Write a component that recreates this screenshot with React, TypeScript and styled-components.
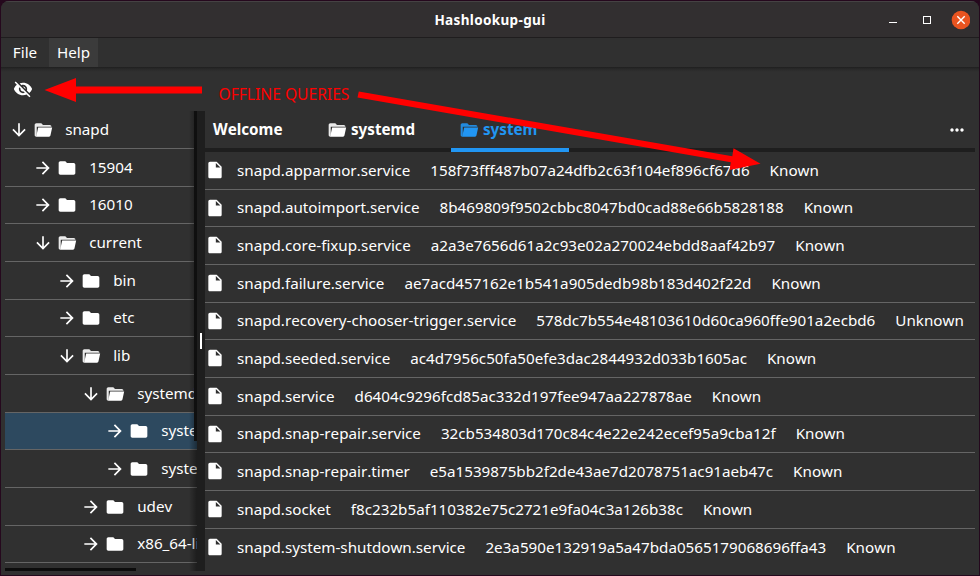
import React from 'react';
import styled, { createGlobalStyle } from 'styled-components';

const GlobalStyle = createGlobalStyle`
  * { box-sizing: border-box; }
  body { margin: 0; background: #2c001e; overflow: hidden; }
`;

const Window = styled.div`
  position: relative;
  width: 980px;
  height: 576px;
  padding: 1px;
  background: #25081d;
  font-family: 'Noto Sans', 'Open Sans', sans-serif;
  font-size: 15.2px;
  font-kerning: none;
  color: #fff;
  overflow: hidden;
`;

const Frame = styled.div`
  display: flex;
  flex-direction: column;
  width: 978px;
  height: 574px;
  border-radius: 8px 8px 0 0;
  background: #303030;
  overflow: hidden;
`;

const TitleBar = styled.header`
  display: grid;
  grid-template-columns: 1fr auto 1fr;
  align-items: center;
  flex: none;
  height: 37px;
  background: #322f30;
  border-top: 1px solid #454243;
  border-bottom: 1px solid #1f1d1e;
`;

const Title = styled.h1`
  grid-column: 2;
  margin: 0;
  font-size: 13.5px;
  line-height: 20px;
  font-weight: 700;
  letter-spacing: 0.35px;
`;

const WindowControls = styled.div`
  display: flex;
  justify-content: flex-end;
  align-items: center;
  height: 18px;
  padding-right: 9px;
`;

const MenuBar = styled.nav`
  display: flex;
  flex: none;
  height: 29px;
`;

const MenuItem = styled.span<{ $active?: boolean; $width: number }>`
  display: flex;
  align-items: center;
  justify-content: center;
  width: ${(p) => p.$width}px;
  height: 29px;
  padding-bottom: 2px;
  background: ${(p) => (p.$active ? '#3b3b3b' : 'transparent')};
`;

const Toolbar = styled.div`
  display: flex;
  flex: none;
  height: 44px;
  padding: 12px 0 0 12px;
  background: linear-gradient(#1f1f1f, #292929 2px, #303030 5px);
`;

const Split = styled.main`
  display: grid;
  grid-template-columns: 192px 8px 770px;
  height: 460px;
  margin-left: 4px;
`;

const TreePane = styled.aside`
  position: relative;
  overflow: hidden;
`;

const TreeRow = styled.div<{ $height: number; $depth: number; $selected?: boolean }>`
  display: flex;
  align-items: center;
  height: ${(p) => p.$height}px;
  padding-left: ${(p) => 4 + p.$depth * 24}px;
  border-bottom: 1px solid #656565;
  background: ${(p) => (p.$selected ? '#2d495f' : 'transparent')};
  white-space: nowrap;
`;

const TreeLabel = styled.span`
  margin-left: 12.2px;
  padding-bottom: 2px;
  line-height: 20px;
`;

const Glyph = styled.svg`
  display: block;
  flex: none;
  width: 20px;
  height: 20px;
  fill: currentColor;
`;

const FolderGlyph = styled(Glyph)<{ $gap: number }>`
  margin-left: ${(p) => p.$gap}px;
`;

const PaneShadow = styled.div`
  position: absolute;
  top: 0;
  right: 0;
  width: 8px;
  height: 100%;
  background: linear-gradient(to right, transparent, rgba(0, 0, 0, 0.4));
`;

const VerticalThumb = styled.div`
  position: absolute;
  top: 0;
  right: 0;
  width: 3px;
  height: 330px;
  background: #0f0f0f;
`;

const HorizontalThumb = styled.div`
  position: absolute;
  bottom: 0;
  left: 0;
  width: 131px;
  height: 3px;
  background: #0c0c0c;
`;

const Divider = styled.div`
  display: flex;
  align-items: center;
  padding-left: 3px;
  background: #1e1e1e;
`;

const Grip = styled.span`
  width: 2px;
  height: 16px;
  background: #fff;
`;

const Content = styled.section`
  display: flex;
  flex-direction: column;
  width: 770px;
`;

const TabBar = styled.div`
  display: flex;
  flex: none;
  height: 41px;
  border-bottom: 4px solid #1e1e1e;
`;

const Tab = styled.div<{ $width: number; $active?: boolean }>`
  display: flex;
  align-items: center;
  width: ${(p) => p.$width}px;
  height: 41px;
  padding-left: 8px;
  font-weight: 700;
  line-height: 20px;
  color: ${(p) => (p.$active ? '#2196f3' : '#fff')};
  border-bottom: 4px solid ${(p) => (p.$active ? '#2196f3' : '#1e1e1e')};
`;

const TabLabel = styled.span<{ $icon?: boolean }>`
  margin-left: ${(p) => (p.$icon ? 4 : 0)}px;
  padding-bottom: 1px;
`;

const TabFolder = styled.span`
  padding-top: 1px;
`;

const MoreButton = styled.div`
  display: flex;
  align-items: center;
  margin-left: auto;
  height: 38px;
  padding-right: 8px;
`;

const FileRow = styled.div<{ $height: number; $last?: boolean }>`
  display: flex;
  align-items: center;
  flex: none;
  height: ${(p) => p.$height}px;
  padding-bottom: 1px;
  border-bottom: 1px solid ${(p) => (p.$last ? 'transparent' : '#656565')};
  line-height: 20px;
  white-space: nowrap;
`;

const FileName = styled.span`
  margin-left: 12px;
  padding-bottom: 1px;
`;

const Cell = styled.span`
  margin-left: 20px;
  padding-bottom: 1px;
`;

const Annotation = styled.svg`
  position: absolute;
  inset: 0;
  pointer-events: none;
`;

const AnnotationText = styled.span`
  position: absolute;
  left: 218.5px;
  top: 85px;
  font-size: 15.6px;
  line-height: 19px;
  color: #f00;
  white-space: nowrap;
`;

const icons = {
  down: 'M20 12l-1.41-1.41L13 16.17V4h-2v12.17l-5.58-5.59L4 12l8 8 8-8z',
  right: 'M12 4l-1.41 1.41L16.17 11H4v2h12.17l-5.58 5.59L12 20l8-8z',
  folder: 'M10 4H4c-1.1 0-2 .9-2 2v12c0 1.1.9 2 2 2h16c1.1 0 2-.9 2-2V8c0-1.1-.9-2-2-2h-8l-2-2z',
  file: 'M6 2c-1.1 0-2 .9-2 2v16c0 1.1.9 2 2 2h12c1.1 0 2-.9 2-2V8l-6-6H6zm7 7V3.5L18.5 9H13z',
  more: 'M6 10c-1.1 0-2 .9-2 2s.9 2 2 2 2-.9 2-2-.9-2-2-2zm12 0c-1.1 0-2 .9-2 2s.9 2 2 2 2-.9 2-2-.9-2-2-2zm-6 0c-1.1 0-2 .9-2 2s.9 2 2 2 2-.9 2-2-.9-2-2-2z',
  hidden:
    'M12 7c2.76 0 5 2.24 5 5 0 .65-.13 1.26-.36 1.83l2.92 2.92c1.51-1.26 2.7-2.89 3.43-4.75-1.73-4.39-6-7.5-11-7.5-1.4 0-2.74.25-3.98.7l2.16 2.16C10.74 7.13 11.35 7 12 7zM2 4.27l2.28 2.28.46.46C3.08 8.3 1.78 10.02 1 12c1.73 4.39 6 7.5 11 7.5 1.55 0 3.03-.3 4.38-.84l.42.42L19.73 22 21 20.73 3.27 3 2 4.27zM7.53 9.8l1.55 1.55c-.05.21-.08.43-.08.65 0 1.66 1.34 3 3 3 .22 0 .44-.03.65-.08l1.55 1.55c-.67.33-1.41.53-2.2.53-2.76 0-5-2.24-5-5 0-.79.2-1.53.53-2.2zm4.31-.78l3.15 3.15.02-.16c0-1.66-1.34-3-3-3l-.17.01z',
};

const Icon = ({ name }: { name: keyof typeof icons }) => (
  <Glyph viewBox="0 0 24 24">
    <path d={icons[name]} />
  </Glyph>
);

const FolderIcon = ({ open, gap = 4 }: { open?: boolean; gap?: number }) => (
  <FolderGlyph viewBox="0 0 24 24" $gap={gap}>
    {open ? (
      <>
        <path
          opacity=".9"
          d="M4 4h6l2 2h8.200c1.100 0 1.900.9 1.900 2.100H4.500v9.900l-.4 2C2.800 20 2 19.100 2 18V6c0-1.100.9-2 2-2z"
        />
        <path d="M6.200 9H23l-2 9.400c-.2 1-.8 1.600-1.800 1.600H3.800z" />
      </>
    ) : (
      <path d={icons.folder} />
    )}
  </FolderGlyph>
);

type Node = { name: string; depth: number; height: number; open?: boolean; selected?: boolean };

const tree: Node[] = [
  { name: 'snapd', depth: 0, height: 38, open: true },
  { name: '15904', depth: 1, height: 38 },
  { name: '16010', depth: 1, height: 37 },
  { name: 'current', depth: 1, height: 38, open: true },
  { name: 'bin', depth: 2, height: 38 },
  { name: 'etc', depth: 2, height: 37 },
  { name: 'lib', depth: 2, height: 38, open: true },
  { name: 'systemd', depth: 3, height: 38, open: true },
  { name: 'system', depth: 4, height: 37, selected: true },
  { name: 'system-generators', depth: 4, height: 38 },
  { name: 'udev', depth: 3, height: 38 },
  { name: 'x86_64-linux-gnu', depth: 3, height: 37 },
];

const files: [string, string, string, number][] = [
  ['snapd.apparmor.service', '158f73fff487b07a24dfb2c63f104ef896cf67d6', 'Known', 38],
  ['snapd.autoimport.service', '8b469809f9502cbbc8047bd0cad88e66b5828188', 'Known', 37],
  ['snapd.core-fixup.service', 'a2a3e7656d61a2c93e02a270024ebdd8aaf42b97', 'Known', 38],
  ['snapd.failure.service', 'ae7acd457162e1b541a905dedb98b183d402f22d', 'Known', 38],
  ['snapd.recovery-chooser-trigger.service', '578dc7b554e48103610d60ca960ffe901a2ecbd6', 'Unknown', 37],
  ['snapd.seeded.service', 'ac4d7956c50fa50efe3dac2844932d033b1605ac', 'Known', 38],
  ['snapd.service', 'd6404c9296fcd85ac332d197fee947aa227878ae', 'Known', 38],
  ['snapd.snap-repair.service', '32cb534803d170c84c4e22e242ecef95a9cba12f', 'Known', 37],
  ['snapd.snap-repair.timer', 'e5a1539875bb2f2de43ae7d2078751ac91aeb47c', 'Known', 38],
  ['snapd.socket', 'f8c232b5af110382e75c2721e9fa04c3a126b38c', 'Known', 38],
  ['snapd.system-shutdown.service', '2e3a590e132919a5a47bda0565179068696ffa43', 'Known', 38],
];

export default function App() {
  return (
    <Window>
      <GlobalStyle />
      <Frame>
        <TitleBar>
          <Title>Hashlookup-gui</Title>
          <WindowControls>
            <svg width="84" height="20" viewBox="886 9 84 20" fill="none">
              <path d="M889 21.500h8" stroke="#fff" />
              <rect x="923.500" y="15.500" width="7" height="7" stroke="#fff" />
              <circle cx="961" cy="19" r="9.300" fill="#e95420" />
              <path d="M957.300 15.300l7.400 7.400m0-7.400l-7.400 7.400" stroke="#fff" strokeWidth="1.400" />
            </svg>
          </WindowControls>
        </TitleBar>
        <MenuBar>
          <MenuItem $width={48}>File</MenuItem>
          <MenuItem $width={49} $active>Help</MenuItem>
        </MenuBar>
        <Toolbar>
          <Icon name="hidden" />
        </Toolbar>
        <Split>
          <TreePane>
            {tree.map((node) => (
              <TreeRow key={node.name} $height={node.height} $depth={node.depth} $selected={node.selected}>
                <Icon name={node.open ? 'down' : 'right'} />
                <FolderIcon open={node.open} />
                <TreeLabel>{node.name}</TreeLabel>
              </TreeRow>
            ))}
            <PaneShadow />
            <VerticalThumb />
            <HorizontalThumb />
          </TreePane>
          <Divider>
            <Grip />
          </Divider>
          <Content>
            <TabBar>
              <Tab $width={114}><TabLabel>Welcome</TabLabel></Tab>
              <Tab $width={132}><TabFolder><FolderIcon open gap={0} /></TabFolder><TabLabel $icon>systemd</TabLabel></Tab>
              <Tab $width={118} $active><TabFolder><FolderIcon open gap={0} /></TabFolder><TabLabel $icon>system</TabLabel></Tab>
              <MoreButton><Icon name="more" /></MoreButton>
            </TabBar>
            {files.map(([name, hash, status, height], i) => (
              <FileRow key={name} $height={height} $last={i === files.length - 1}>
                <Icon name="file" />
                <FileName>{name}</FileName>
                <Cell>{hash}</Cell>
                <Cell>{status}</Cell>
              </FileRow>
            ))}
          </Content>
        </Split>
      </Frame>
      <Annotation width="980" height="576" fill="#f00">
        <path d="M44.500 90L76 78v8.500h126v7H76v8.500z" />
        <path d="M358.800 91.500L732.300 156.200L733.500 148.200L760.500 163.700L729.500 170l1.300-7.800L357.500 97.500z" />
      </Annotation>
      <AnnotationText>OFFLINE QUERIES</AnnotationText>
    </Window>
  );
}
